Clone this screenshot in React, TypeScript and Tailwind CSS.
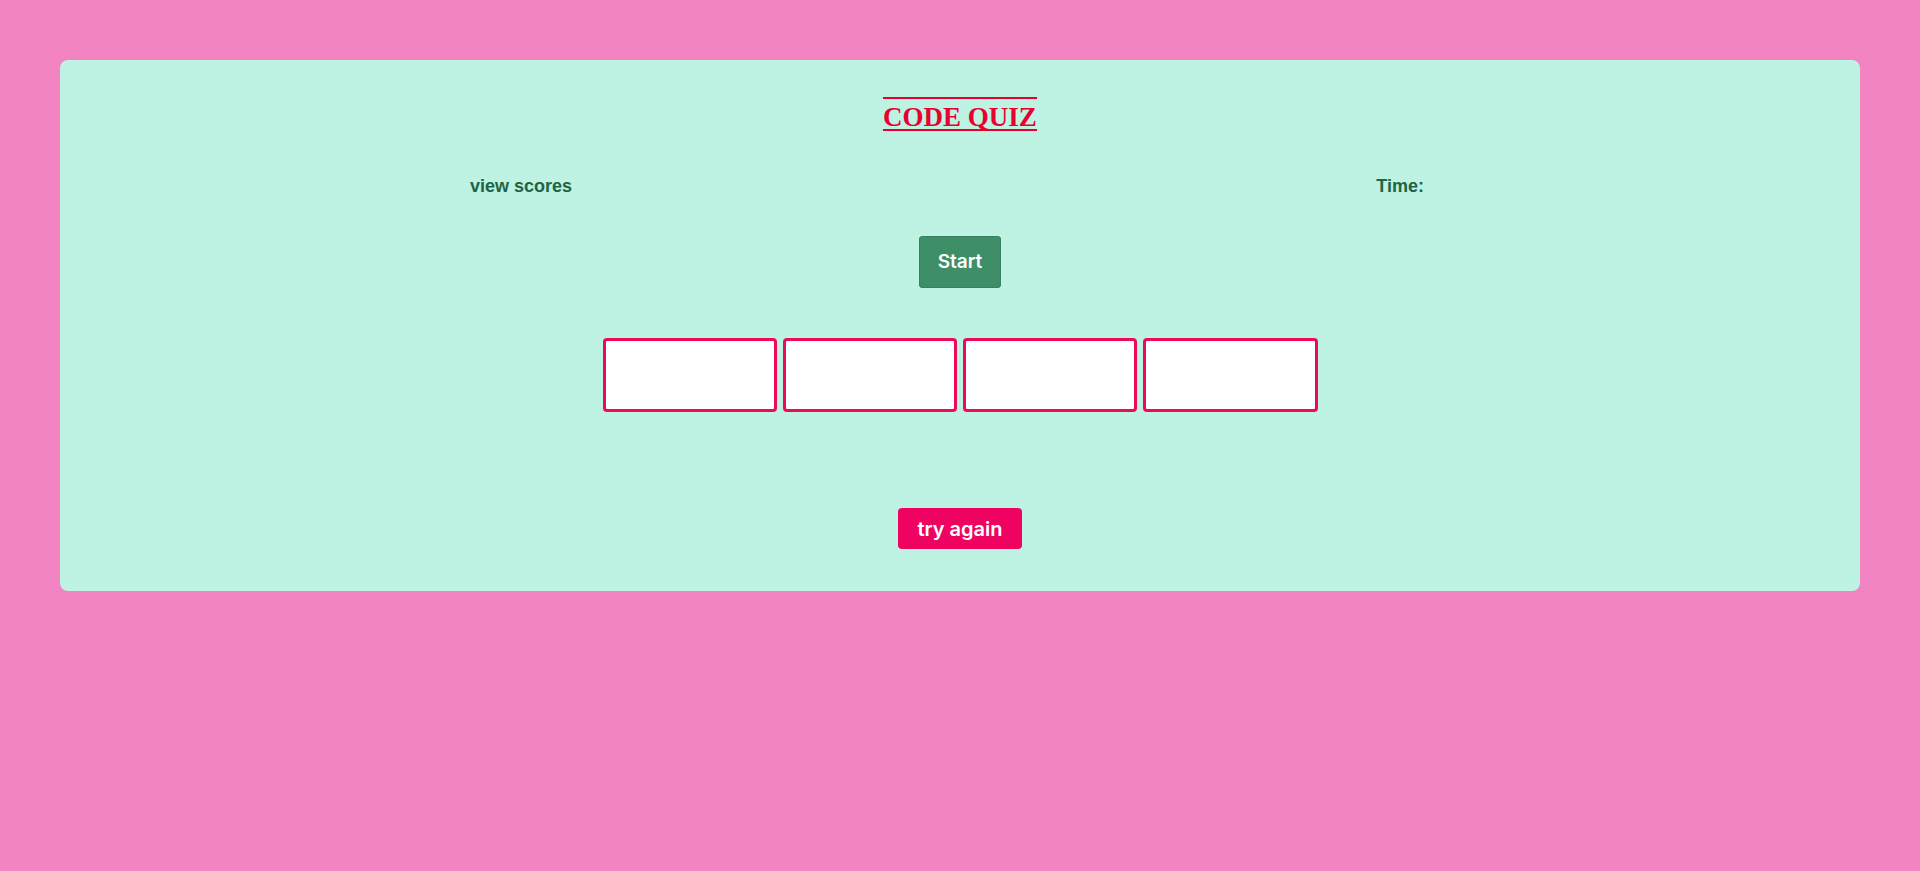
import React from "react";

export default function App() {
  return (
    <div className="min-h-[871px] w-full bg-[#f284c4] pt-[60px] px-[60px]" style={{ fontFamily: '"Liberation Sans", Arial, sans-serif' }}>
      <div className="w-full h-[531px] bg-[#bef2e2] rounded-[8px] flex flex-col items-center">
        <h1 className="mt-[37px] pt-[7px] text-[27px] leading-[23px] font-bold text-[#e8002e] border-t-2 border-b-2 border-[#e8002e]" style={{ fontFamily: '"Liberation Serif", "Times New Roman", serif' }}>
          CODE QUIZ
        </h1>
        <div className="w-full flex justify-between pl-[410px] pr-[436px] mt-[43px] text-[18px] leading-[24px] font-bold text-[#1e6446]">
          <span>view scores</span>
          <span>Time:</span>
        </div>
        <button className="mt-[38px] w-[82px] h-[52px] bg-[#3e8f68] border border-[#378060] rounded-[3px] text-white text-[19px] font-semibold" style={{ fontFamily: 'Inter, "Open Sans", sans-serif' }}>
          Start
        </button>
        <div className="mt-[50px] flex gap-[6px]">
          <div className="w-[174px] h-[74px] bg-white border-[3px] border-[#ee0a5a] rounded-[4px]" />
          <div className="w-[174px] h-[74px] bg-white border-[3px] border-[#ee0a5a] rounded-[4px]" />
          <div className="w-[174px] h-[74px] bg-white border-[3px] border-[#ee0a5a] rounded-[4px]" />
          <div className="w-[175px] h-[74px] bg-white border-[3px] border-[#ee0a5a] rounded-[4px]" />
        </div>
        <button className="mt-[96px] w-[124px] h-[41px] bg-[#ef0360] rounded-[4px] text-white text-[20px] font-semibold" style={{ fontFamily: 'Inter, "Open Sans", sans-serif' }}>
          try again
        </button>
      </div>
    </div>
  );
}
